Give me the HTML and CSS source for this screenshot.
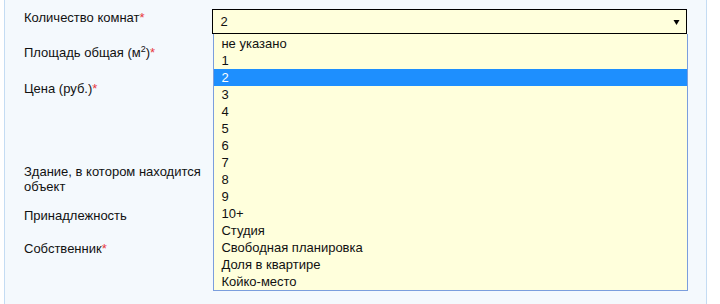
FILE: index.html
```html
<!DOCTYPE html>
<html lang="ru">
<head>
    <meta charset="UTF-8">
    <meta name="viewport" content="width=device-width, initial-scale=1.0">
    <title>Объект</title>
    <link rel="stylesheet" href="styles.css">
</head>
<body>
    <div class="panel">
        <form class="object-form">
            <div class="row row-rooms">
                <label class="label">Количество комнат<span class="req">*</span></label>
                <div class="field">
                    <div class="select">
                        <span class="select-value">2</span>
                        <svg class="select-arrow" width="7" height="5" viewBox="0 0 7 5"><path d="M0.5 0H6.5L3.5 5Z" fill="#000"/></svg>
                    </div>
                    <ul class="dropdown">
                        <li>не указано</li>
                        <li>1</li>
                        <li class="selected">2</li>
                        <li>3</li>
                        <li>4</li>
                        <li>5</li>
                        <li>6</li>
                        <li>7</li>
                        <li>8</li>
                        <li>9</li>
                        <li>10+</li>
                        <li>Студия</li>
                        <li>Свободная планировка</li>
                        <li>Доля в квартире</li>
                        <li>Койко-место</li>
                    </ul>
                </div>
            </div>
            <div class="row row-area">
                <label class="label">Площадь общая (м<sup>2</sup>)<span class="req">*</span></label>
                <div class="field"></div>
            </div>
            <div class="row row-price">
                <label class="label">Цена (руб.)<span class="req">*</span></label>
                <div class="field"></div>
            </div>
            <div class="row row-building">
                <label class="label">Здание, в котором находится объект</label>
                <div class="field"></div>
            </div>
            <div class="row row-owner-type">
                <label class="label">Принадлежность</label>
                <div class="field"></div>
            </div>
            <div class="row row-owner">
                <label class="label">Собственник<span class="req">*</span></label>
                <div class="field owner-field">
                    <span class="grip"></span>
                    <span class="owner-check"></span>
                    <span class="owner-link"></span>
                </div>
            </div>
        </form>
    </div>
</body>
</html>
```

FILE: styles.css
```css
body {
    margin: 0;
    background: #fff;
    font-family: "Liberation Sans", Arial, sans-serif;
    font-size: 13px;
    color: #111;
}
.panel {
    margin-left: 4px;
    width: 703px;
    height: 304px;
    box-sizing: border-box;
    border-left: 1px solid #c4dcf3;
    border-right: 1px solid #c4dcf3;
    background: #f4f9fd;
    padding: 9px 19px 0 19px;
}
.row {
    display: flex;
}
.label {
    width: 189px;
    padding-top: 1px;
    padding-right: 4px;
    box-sizing: border-box;
    line-height: 15px;
}
.label sup {
    font-size: 9px;
    line-height: 0;
}
.req {
    color: #e8383d;
}
.field {
    position: relative;
    width: 476px;
}
.row-rooms { height: 35px; }
.row-area { height: 36px; }
.row-price { height: 83px; }
.row-building { height: 44px; }
.row-owner-type { height: 33px; }
.row-owner { height: 51px; }

.select {
    height: 25px;
    box-sizing: border-box;
    border: 1px solid #000;
    background: #ffffdc;
    display: flex;
    align-items: center;
    justify-content: space-between;
    padding: 0 6px 0 7px;
}
.select-arrow {
    margin-top: 1px;
}
.dropdown {
    position: absolute;
    top: 25px;
    left: 1px;
    width: 475px;
    box-sizing: border-box;
    margin: 0;
    padding: 0;
    list-style: none;
    background: #ffffdc;
    border: 1px solid #7b9edd;
    border-top: none;
    z-index: 2;
}
.dropdown li {
    height: 17px;
    line-height: 17px;
    padding-left: 7px;
}
.dropdown li:first-child {
    margin-top: 1px;
}
.dropdown .selected {
    background: #1e8ffe;
    color: #fff;
}
.owner-field .grip {
    position: absolute;
    left: 1px;
    top: 43px;
    width: 4px;
    height: 2px;
    background: #a79a86;
}
.owner-check {
    position: absolute;
    left: 277px;
    top: 40px;
    width: 5px;
    height: 4px;
    background: #7fae3c;
}
.owner-link {
    position: absolute;
    left: 291px;
    top: 44px;
    width: 185px;
    border-bottom: 1px dotted #1b7fd3;
}
```
